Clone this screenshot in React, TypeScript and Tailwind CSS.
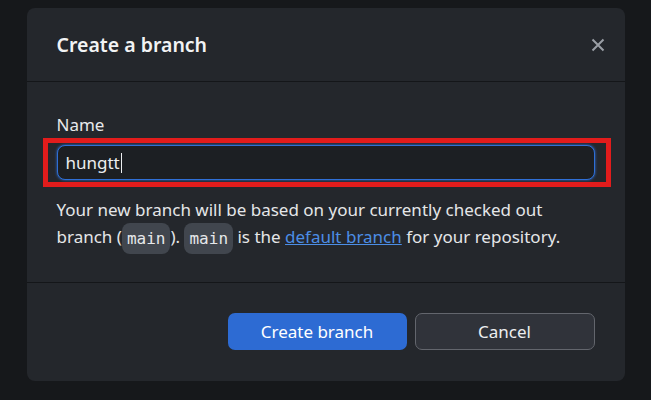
const SANS = "'Noto Sans', 'Open Sans', sans-serif";
const MONO = "'DejaVu Sans Mono', 'Liberation Mono', monospace";

function Code({ children }: { children: string }) {
  return (
    <code
      className="inline-block rounded-[8px] bg-[#41464e] px-[5px] py-[3px] align-[-1px] text-[16px] leading-[25px] text-[#e6e8ea]"
      style={{ fontFamily: MONO }}
    >
      {children}
    </code>
  );
}

export default function App() {
  return (
    <div className="flex h-[400px] w-[651px] justify-center bg-[#16181b] pt-[8px]" style={{ fontFamily: SANS }}>
      <div className="flex h-[373px] w-[598px] flex-col rounded-[8px] bg-[#24272c]">
        <div className="flex h-[74px] items-center justify-between border-b border-[#141619] pl-[30px] pr-[15px]">
          <h1 className="text-[19.5px] font-semibold text-[#f2f3f4]">Create a branch</h1>
          <button className="flex h-[24px] w-[24px] items-center justify-center text-[#9a9ea5]">
            <svg width="14" height="14" viewBox="0 0 14 14" fill="none" stroke="currentColor" strokeWidth="2">
              <path d="M1.5 1.5l11 11M12.5 1.5l-11 11" />
            </svg>
          </button>
        </div>

        <div className="flex flex-col border-b border-[#141619] px-[30px] pb-[28px] pt-[31px]">
          <label className="text-[17px] leading-[24px] text-[#e8e9eb]">Name</label>
          <div className="relative mt-[8px]">
            <div className="flex h-[35px] items-center rounded-[8px] border border-[#2f6fd6] bg-[#1c1f23] px-[8px] shadow-[0_0_3px_#2f6fd6]">
              <span className="text-[17px] text-[#eceef0]">hungtt</span>
              <span className="ml-[1px] h-[20px] w-[1px] bg-[#eceef0]" />
            </div>
            <div className="pointer-events-none absolute -inset-[7px] -left-[14px] -right-[16px] border-[5px] border-[#e21c1c]" />
          </div>
          <p className="mt-[16px] text-[17px] leading-[27px] text-[#e4e6e8]">
            Your new branch will be based on your currently checked out branch (<Code>main</Code>).{" "}
            <Code>main</Code> is the{" "}
            <a className="text-[#4c8ee6] underline">default branch</a> for your repository.
          </p>
        </div>

        <div className="flex flex-1 items-start justify-end gap-[8px] px-[30px] pt-[30px]">
          <button className="h-[37px] w-[179px] rounded-[7px] bg-[#2d6bd3] text-[17px] text-white">Create branch</button>
          <button className="h-[37px] w-[180px] rounded-[7px] border border-[#63666d] bg-[#30333a] text-[17px] text-[#eceef0]">
            Cancel
          </button>
        </div>
      </div>
    </div>
  );
}
